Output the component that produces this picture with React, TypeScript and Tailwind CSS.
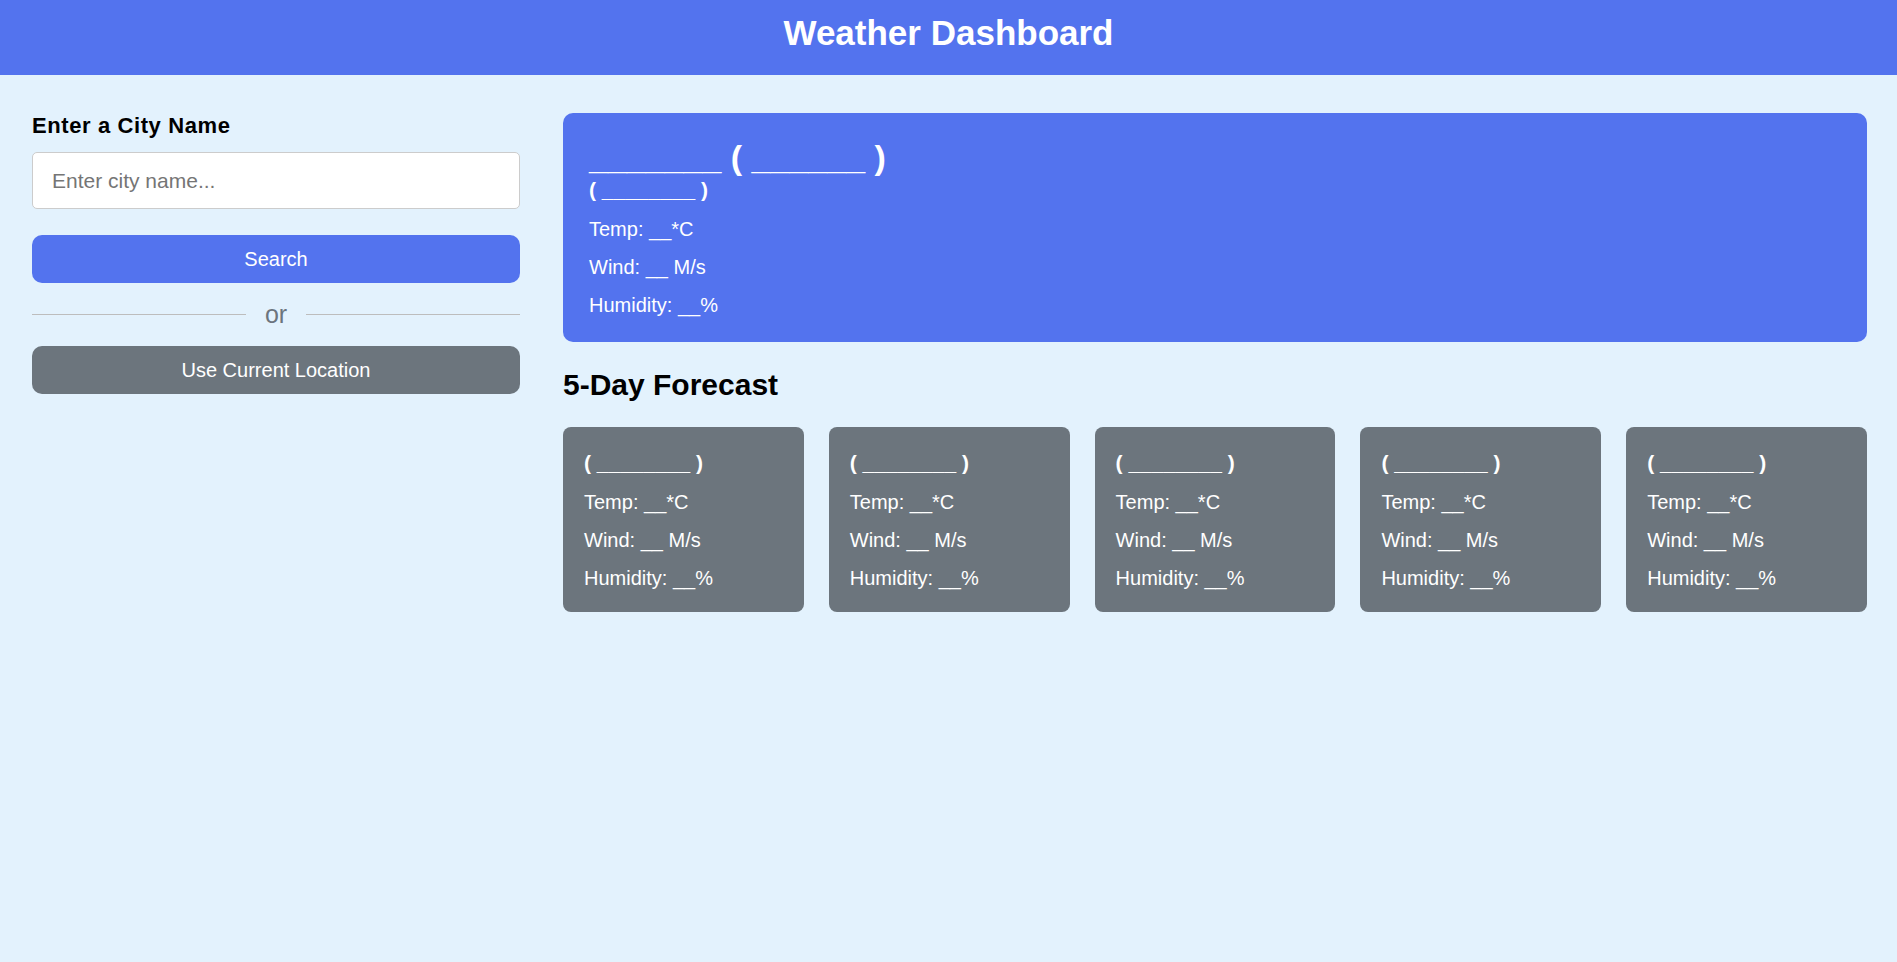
import React from 'react';

const days = [1, 2, 3, 4, 5];

const WeatherLines: React.FC = () => {
    return (
        <div className="mt-[8px] text-[20px] leading-[38px]">
            <p>Temp: __*C</p>
            <p>Wind: __ M/s</p>
            <p>Humidity: __%</p>
        </div>
    );
};

const App: React.FC = () => {
    return (
        <div className="min-h-screen bg-[#e3f2fd] font-['Liberation_Sans',Arial,sans-serif] text-black">
            <header className="h-[75px] bg-[#5373ee] pt-[13px] text-center">
                <h1 className="text-[35px] leading-[40px] font-bold text-white">Weather Dashboard</h1>
            </header>

            <main className="flex gap-[43px] pl-[32px] pr-[30px] pt-[38px]">
                {/* search side */}
                <div className="w-[488px] shrink-0">
                    <h3 className="mt-[1px] text-[22px] leading-[24px] font-bold tracking-[0.6px]">Enter a City Name</h3>
                    <input
                        type="text"
                        placeholder="Enter city name..."
                        className="mt-[14px] h-[57px] w-full rounded-[5px] border border-[#cccccc] bg-white px-[19px] text-[21px] placeholder:text-[#757575] outline-none"
                    />
                    <button className="mt-[26px] h-[48px] w-full rounded-[10px] bg-[#5373ee] text-[20px] text-white">
                        Search
                    </button>
                    <div className="mt-[20px] flex h-[22px] items-center">
                        <div className="h-px flex-1 bg-[#bdbdbd]" />
                        <span className="mx-[19px] text-[25px] leading-[22px] text-[#6c757d]">or</span>
                        <div className="h-px flex-1 bg-[#bdbdbd]" />
                    </div>
                    <button className="mt-[21px] h-[48px] w-full rounded-[10px] bg-[#6c757d] text-[20px] text-white">
                        Use Current Location
                    </button>
                </div>

                {/* weather side */}
                <div className="flex-1">
                    <div className="rounded-[10px] bg-[#5373ee] pl-[26px] pr-[25px] pt-[25px] pb-[18px] text-white">
                        <h2 className="text-[34px] leading-[38px] font-bold">_______ ( ______ )</h2>
                        <p className="mt-[2px] text-[21px] leading-[24px] font-bold">( ________ )</p>
                        <WeatherLines />
                    </div>

                    <h2 className="mt-[25px] text-[30px] leading-[35px] font-bold">5-Day Forecast</h2>

                    <div className="mt-[25px] flex gap-[25px]">
                        {days.map((d) => (
                            <div key={d} className="flex-1 rounded-[8px] bg-[#6c757d] px-[21px] pt-[24px] pb-[15px] text-white">
                                <p className="text-[21px] leading-[24px] font-bold">( ________ )</p>
                                <WeatherLines />
                            </div>
                        ))}
                    </div>
                </div>
            </main>
        </div>
    );
};

export default App;
